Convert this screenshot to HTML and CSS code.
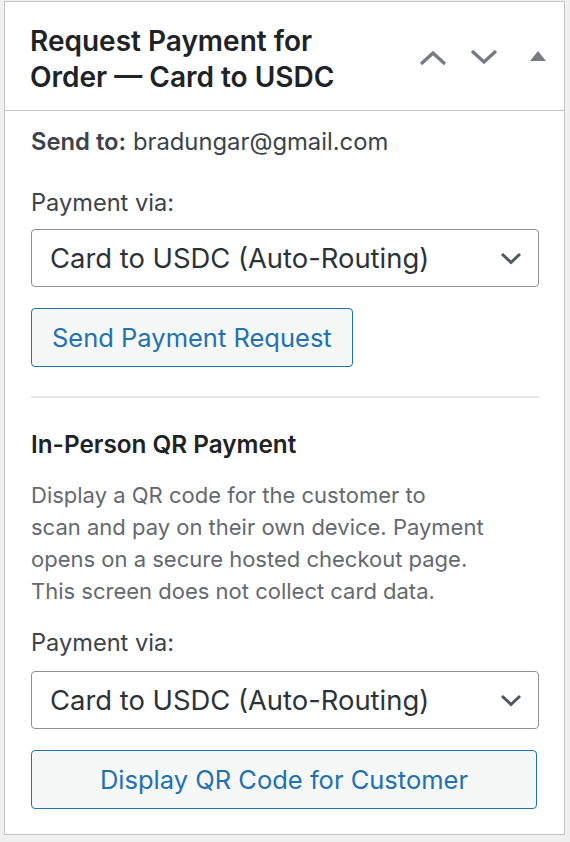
FILE: index.html
```html
<!DOCTYPE html>
<html lang="en">
<head>
<meta charset="utf-8">
<title>Request Payment</title>
<link rel="stylesheet" href="styles.css">
</head>
<body>
<div class="postbox">
  <div class="postbox-header">
    <h2 class="hndle">Request Payment for<br>Order — Card to USDC</h2>
    <div class="handle-actions">
      <button class="handle-btn up" aria-label="Move up">
        <svg width="28" height="16" viewBox="0 0 28 16"><path d="M2 14 L14 3 L26 14" fill="none" stroke="#787c82" stroke-width="3.4"/></svg>
      </button>
      <button class="handle-btn down" aria-label="Move down">
        <svg width="28" height="16" viewBox="0 0 28 16"><path d="M2 2 L14 13 L26 2" fill="none" stroke="#787c82" stroke-width="3.4"/></svg>
      </button>
      <button class="handle-btn toggle" aria-label="Toggle panel">
        <svg width="16" height="10" viewBox="0 0 16 10"><path d="M8 0 L16 10 L0 10 Z" fill="#787c82"/></svg>
      </button>
    </div>
  </div>
  <div class="inside">
    <p class="send-to"><strong>Send to:</strong> bradungar@gmail.com</p>
    <label class="field-label">Payment via:</label>
    <div class="select">
      <span>Card to USDC (Auto-Routing)</span>
      <svg width="22" height="13" viewBox="0 0 22 13"><path d="M2 2 L11 10.5 L20 2" fill="none" stroke="#50575e" stroke-width="3"/></svg>
    </div>
    <button class="button">Send Payment Request</button>
    <hr class="divider">
    <h3 class="section-title">In-Person QR Payment</h3>
    <p class="description">Display a QR code for the customer to<br>scan and pay on their own device. Payment<br>opens on a secure hosted checkout page.<br>This screen does not collect card data.</p>
    <label class="field-label">Payment via:</label>
    <div class="select select-second">
      <span>Card to USDC (Auto-Routing)</span>
      <svg width="22" height="13" viewBox="0 0 22 13"><path d="M2 2 L11 10.5 L20 2" fill="none" stroke="#50575e" stroke-width="3"/></svg>
    </div>
    <button class="button button-wide">Display QR Code for Customer</button>
  </div>
</div>
</body>
</html>
```
FILE: styles.css
```css
html, body {
  margin: 0;
  padding: 0;
}
body {
  background: #f0f0f1;
  padding: 1px 5px 0 4px;
  font-family: Inter, "Noto Sans", sans-serif;
  color: #3c434a;
  height: 841px;
  box-sizing: border-box;
}
.postbox {
  background: #fff;
  border: 1px solid #c3c4c7;
  height: 834px;
  box-sizing: border-box;
}
.postbox-header {
  display: flex;
  align-items: flex-start;
  justify-content: space-between;
  height: 109px;
  border-bottom: 1px solid #c3c4c7;
  box-sizing: border-box;
  padding: 21px 18px 0 25px;
}
.hndle {
  margin: 0;
  font-size: 28px;
  line-height: 36px;
  font-weight: 600;
  color: #1d2327;
}
.handle-actions {
  display: flex;
  align-items: flex-start;
  gap: 23px;
}
.handle-btn {
  background: none;
  border: 0;
  padding: 0;
  display: flex;
}
.handle-btn.up {
  margin-top: 27px;
}
.handle-btn.down {
  margin-top: 26px;
}
.handle-btn.toggle {
  margin-left: 9px;
  margin-top: 28px;
}
.inside {
  padding: 0 25px 0 26px;
  display: flex;
  flex-direction: column;
  align-items: flex-start;
}
.send-to {
  margin: 16px 0 0;
  font-size: 23.8px;
  line-height: 30px;
}
.send-to strong {
  font-weight: 600;
}
.field-label {
  display: block;
  margin-top: 31px;
  font-size: 23.6px;
  line-height: 30px;
}
.select {
  align-self: stretch;
  margin-top: 11px;
  height: 58px;
  box-sizing: border-box;
  border: 1.5px solid #8c8f94;
  border-radius: 4px;
  display: flex;
  align-items: center;
  justify-content: space-between;
  padding: 0 16px 0 18px;
  font-size: 27.4px;
  color: #2c3338;
}
.select-second {
  margin-top: 13px;
}
.button {
  margin-top: 21px;
  height: 59px;
  box-sizing: border-box;
  border: 1.5px solid #2271b1;
  border-radius: 4px;
  background: #f6f7f7;
  color: #2271b1;
  font-family: inherit;
  font-size: 25.5px;
  padding: 0 20px;
}
.button-wide {
  align-self: stretch;
  margin-right: 2px;
}
.divider {
  align-self: stretch;
  border: 0;
  border-top: 2px solid #e6e6e8;
  margin: 29px 0 0;
}
.section-title {
  margin: 31px 0 0;
  font-size: 24.3px;
  line-height: 30px;
  font-weight: 600;
  color: #1d2327;
}
.description {
  margin: 20px 0 0;
  font-size: 22px;
  line-height: 32px;
  color: #646970;
}
.description + .field-label {
  margin-top: 21px;
}
```
